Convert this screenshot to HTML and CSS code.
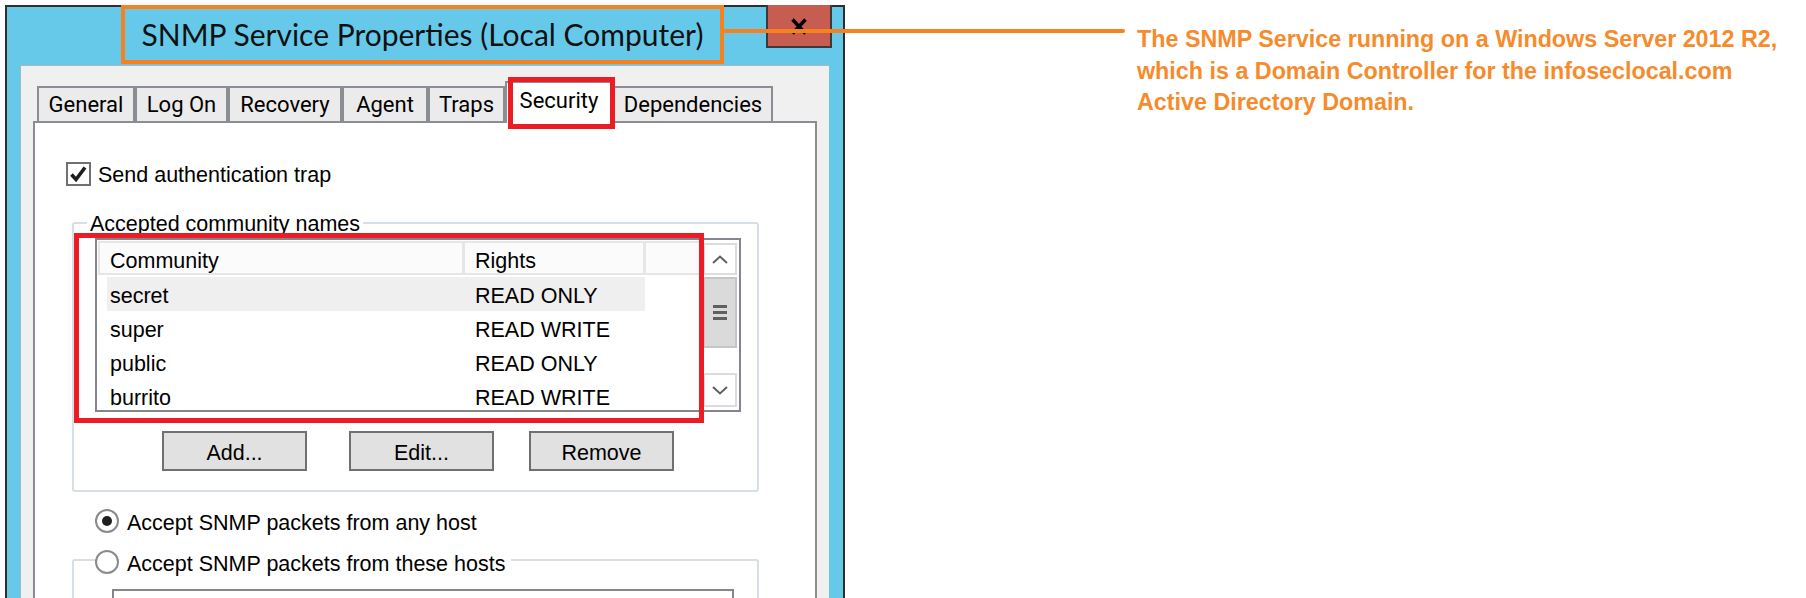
FILE: index.html
```html
<!DOCTYPE html>
<html lang="en">
<head>
<meta charset="utf-8">
<title>SNMP Service Properties</title>
<link rel="stylesheet" href="styles.css">
</head>
<body>
<div class="canvas">
  <div class="window">
    <div class="titlebar">
      <h1 class="title">SNMP Service Properties (Local Computer)</h1>
      <div class="close" aria-label="Close">
        <svg width="16" height="17" viewBox="0 0 16 17"><path d="M1.5 1.5 L14.5 15.5 M14.5 1.5 L1.5 15.5" stroke="#000" stroke-width="3.4" fill="none"/></svg>
      </div>
    </div>
    <div class="frame">
      <div class="panel">
        <div class="tabs">
          <div class="tab t-general">General</div>
          <div class="tab t-logon">Log On</div>
          <div class="tab t-recovery">Recovery</div>
          <div class="tab t-agent">Agent</div>
          <div class="tab t-traps">Traps</div>
          <div class="tab t-security selected">Security</div>
          <div class="tab t-deps">Dependencies</div>
        </div>
        <div class="page">
          <div class="check-row">
            <span class="checkbox"><svg width="21" height="20" viewBox="0 0 21 20"><path d="M3.5 10.5 L8 15.5 L17 3.5" stroke="#1e1e1e" stroke-width="3.6" fill="none"/></svg></span>
            <span class="lbl">Send authentication trap</span>
          </div>
          <div class="group group-names">
            <div class="group-label">Accepted community names</div>
            <div class="listview">
              <div class="lv-main">
                <div class="lv-header">
                  <div class="hcell hc1">Community</div>
                  <div class="hcell hc2">Rights</div>
                  <div class="hfill"></div>
                </div>
                <div class="lv-row sel"><div class="c1">secret</div><div class="c2">READ ONLY</div></div>
                <div class="lv-row"><div class="c1">super</div><div class="c2">READ WRITE</div></div>
                <div class="lv-row"><div class="c1">public</div><div class="c2">READ ONLY</div></div>
                <div class="lv-row"><div class="c1">burrito</div><div class="c2">READ WRITE</div></div>
              </div>
              <div class="scrollbar">
                <div class="sb-btn sb-up"><svg width="16" height="9" viewBox="0 0 16 9"><path d="M1 8 L8 1.5 L15 8" stroke="#606060" stroke-width="2" fill="none"/></svg></div>
                <div class="sb-thumb"><svg width="14" height="15" viewBox="0 0 14 15"><rect x="0" y="0" width="14" height="3" fill="#606060"/><rect x="0" y="6" width="14" height="3" fill="#606060"/><rect x="0" y="12" width="14" height="3" fill="#606060"/></svg></div>
                <div class="sb-track"></div>
                <div class="sb-btn sb-down"><svg width="16" height="9" viewBox="0 0 16 9"><path d="M1 1 L8 7.5 L15 1" stroke="#606060" stroke-width="2" fill="none"/></svg></div>
              </div>
            </div>
            <div class="btn-row">
              <div class="btn">Add...</div>
              <div class="btn btn-edit">Edit...</div>
              <div class="btn btn-remove">Remove</div>
            </div>
          </div>
          <div class="radio-row">
            <span class="radio on"></span>
            <span class="lbl">Accept SNMP packets from any host</span>
          </div>
          <div class="group group-hosts">
            <div class="radio-row group-radio">
              <span class="radio"></span>
              <span class="lbl">Accept SNMP packets from these hosts</span>
            </div>
            <div class="hostbox"></div>
          </div>
        </div>
      </div>
    </div>
  </div>
  <div class="note">The SNMP Service running on a Windows Server 2012 R2,<br>which is a Domain Controller for the infoseclocal.com<br>Active Directory Domain.</div>
  <div class="connector"></div>
</div>
</body>
</html>
```

FILE: styles.css
```css
*, *::before, *::after { box-sizing: border-box; }

html, body {
  margin: 0;
  padding: 0;
  background: #ffffff;
}

body {
  font-family: "Liberation Sans", Arial, sans-serif;
  font-size: 21.5px;
  color: #000;
}

.canvas {
  position: relative;
  width: 1806px;
  height: 598px;
  overflow: hidden;
  display: flex;
  align-items: flex-start;
  background: #fff;
}

/* ---------- window ---------- */
.window {
  margin: 5px 0 0 5px;
  width: 840px;
  height: 700px;
  flex: none;
  background: #66c9ea;
  border-left: 2px solid #2e2e2e;
  border-right: 2px solid #2e2e2e;
}

.titlebar {
  position: relative;
  height: 60px;
  border-top: 2px solid #2e2e2e;
  display: flex;
  justify-content: center;
  align-items: flex-start;
}

.title {
  margin: -2px 5px 0 0;
  height: 59px;
  width: 603px;
  border: 4px solid #f6821f;
  font-family: Lato, "Liberation Sans", sans-serif;
  font-weight: normal;
  font-size: 30px;
  line-height: 51px;
  text-align: center;
  color: #111;
  white-space: nowrap;
}

.close {
  position: absolute;
  top: -2px;
  right: 11px;
  width: 66px;
  height: 43px;
  background: #c75c51;
  border: 2px solid #3a3a3a;
  border-top: 0;
  display: flex;
  justify-content: center;
  align-items: flex-start;
  padding-top: 13px;
}

.frame {
  padding: 0 14px 0 13px;
}

.panel {
  background: #f0f0f0;
  border-top: 1px solid #a4b8c6;
  border-left: 1px solid #a4b8c6;
  padding: 20px 12px 0 12px;
  height: 640px;
}

/* ---------- tabs ---------- */
.tabs {
  position: relative;
  z-index: 2;
  display: flex;
  align-items: flex-end;
  height: 35px;
  margin-left: 4px;
  font-family: Roboto, "Liberation Sans", sans-serif;
  font-size: 22px;
}

.tab {
  height: 35px;
  border: 2px solid #8b8d94;
  border-bottom: 0;
  background: #ebebeb;
  line-height: 33px;
  text-align: center;
  white-space: nowrap;
}

.t-general { width: 98px; }
.t-logon { width: 93px; }
.t-recovery { width: 114px; }
.t-agent { width: 86px; }
.t-traps { width: 77px; }
.t-security { width: 108px; }
.t-deps { width: 160px; }

.tab.selected {
  position: relative;
  height: 42px;
  margin-bottom: -2px;
  padding-top: 1px;
  background: #fff;
}

.tab.selected::after {
  content: "";
  position: absolute;
  left: 1px;
  top: -6px;
  width: 107px;
  height: 52px;
  border: 5px solid #ec1c24;
}

/* ---------- page ---------- */
.page {
  background: #fff;
  border: 2px solid #8b8d94;
  border-bottom: 0;
  height: 520px;
  padding-top: 36px;
}

.check-row {
  display: flex;
  align-items: flex-start;
  gap: 7px;
  height: 30px;
  line-height: 33px;
  margin-left: 31px;
}

.checkbox {
  margin-top: 3px;
  width: 25px;
  height: 24px;
  border: 2px solid #707070;
  background: #fff;
  display: flex;
  align-items: center;
  justify-content: center;
}

.group {
  margin-left: 37px;
  width: 687px;
  border: 2px solid #d6dee6;
  border-radius: 3px;
}

.group-names {
  margin-top: 33px;
  padding-bottom: 19px;
}

.group-label {
  margin: -16px 0 0 13px;
  padding: 1px 3px 0;
  width: fit-content;
  background: #fff;
  line-height: 30px;
  white-space: nowrap;
}

/* ---------- list view ---------- */
.listview {
  position: relative;
  margin: -1px 0 0 21px;
  width: 646px;
  height: 174px;
  border: 2px solid #83868c;
  background: #fff;
  display: flex;
}

.listview::after {
  content: "";
  position: absolute;
  left: -23px;
  top: -7px;
  width: 630px;
  height: 190px;
  border: 5px solid #ec1c24;
}

.lv-main {
  width: 605px;
  height: 170px;
  overflow: hidden;
}

.lv-header {
  display: flex;
  height: 34px;
  margin: 1px 0 0 1px;
  background: #fbfbfb;
  border-top: 2px solid #e6e6e6;
  border-bottom: 2px solid #e6e6e6;
  line-height: 36px;
}

.hcell {
  padding-left: 10px;
  white-space: nowrap;
}

.hc1 {
  width: 367px;
  border-left: 2px solid #e6e6e6;
  border-right: 3px solid #e6e6e6;
}

.hc2 {
  width: 181px;
  border-right: 3px solid #e6e6e6;
}

.hfill { flex: 1; }

.lv-row {
  display: flex;
  width: 538px;
  height: 34px;
  padding-top: 2px;
  line-height: 35px;
  margin-left: 10px;
  white-space: nowrap;
}

.lv-header + .lv-row { margin-top: 2px; }

.lv-row.sel { background: #efefef; }

.c1 { width: 358px; padding-left: 3px; }
.c2 { width: 180px; padding-left: 10px; }

.scrollbar {
  width: 37px;
  padding: 3px 2px 0 1px;
  display: flex;
  flex-direction: column;
}

.sb-btn {
  border: 2px solid #dcdcdc;
  background: #fff;
  display: flex;
  align-items: center;
  justify-content: center;
}

.sb-up { height: 32px; }
.sb-down { height: 34px; }

.sb-thumb {
  margin-top: 2px;
  height: 71px;
  background: #dadada;
  border: 2px solid #c6c6c6;
  display: flex;
  align-items: center;
  justify-content: center;
}

.sb-track { height: 25px; }

/* ---------- buttons ---------- */
.btn-row {
  display: flex;
  margin: 19px 0 0 88px;
}

.btn {
  width: 145px;
  height: 40px;
  border: 2px solid #707070;
  background: #e1e1e1;
  line-height: 40px;
  text-align: center;
}

.btn-edit { margin-left: 42px; }
.btn-remove { margin-left: 35px; }

/* ---------- radios ---------- */
.radio-row {
  display: flex;
  align-items: center;
  gap: 8px;
  height: 30px;
  line-height: 30px;
  margin: 14px 0 0 60px;
  white-space: nowrap;
}

.radio-row .lbl { padding-top: 3px; }

.radio {
  width: 24px;
  height: 24px;
  border-radius: 50%;
  border: 2px solid #8a8a8a;
  background: #fff;
  display: flex;
  align-items: center;
  justify-content: center;
}

.radio.on::after {
  content: "";
  width: 10px;
  height: 10px;
  border-radius: 50%;
  background: #1f1f1f;
}

.group-hosts {
  margin-top: 23px;
  height: 120px;
}

.group-radio {
  margin: -14px 0 0 21px;
  padding-right: 6px;
  width: fit-content;
  background: #fff;
}

.hostbox {
  margin: 12px 0 0 38px;
  width: 622px;
  height: 60px;
  border: 2px solid #83868c;
}

/* ---------- annotation ---------- */
.note {
  margin: 24px 0 0 292px;
  font-family: "Liberation Sans", Arial, sans-serif;
  font-weight: bold;
  font-size: 23.3px;
  line-height: 31.5px;
  color: #f68b2c;
  white-space: nowrap;
}

.connector {
  position: absolute;
  left: 724px;
  top: 29px;
  width: 401px;
  height: 4px;
  background: #f6821f;
  border-radius: 0 2px 2px 0;
  z-index: 5;
}
```
